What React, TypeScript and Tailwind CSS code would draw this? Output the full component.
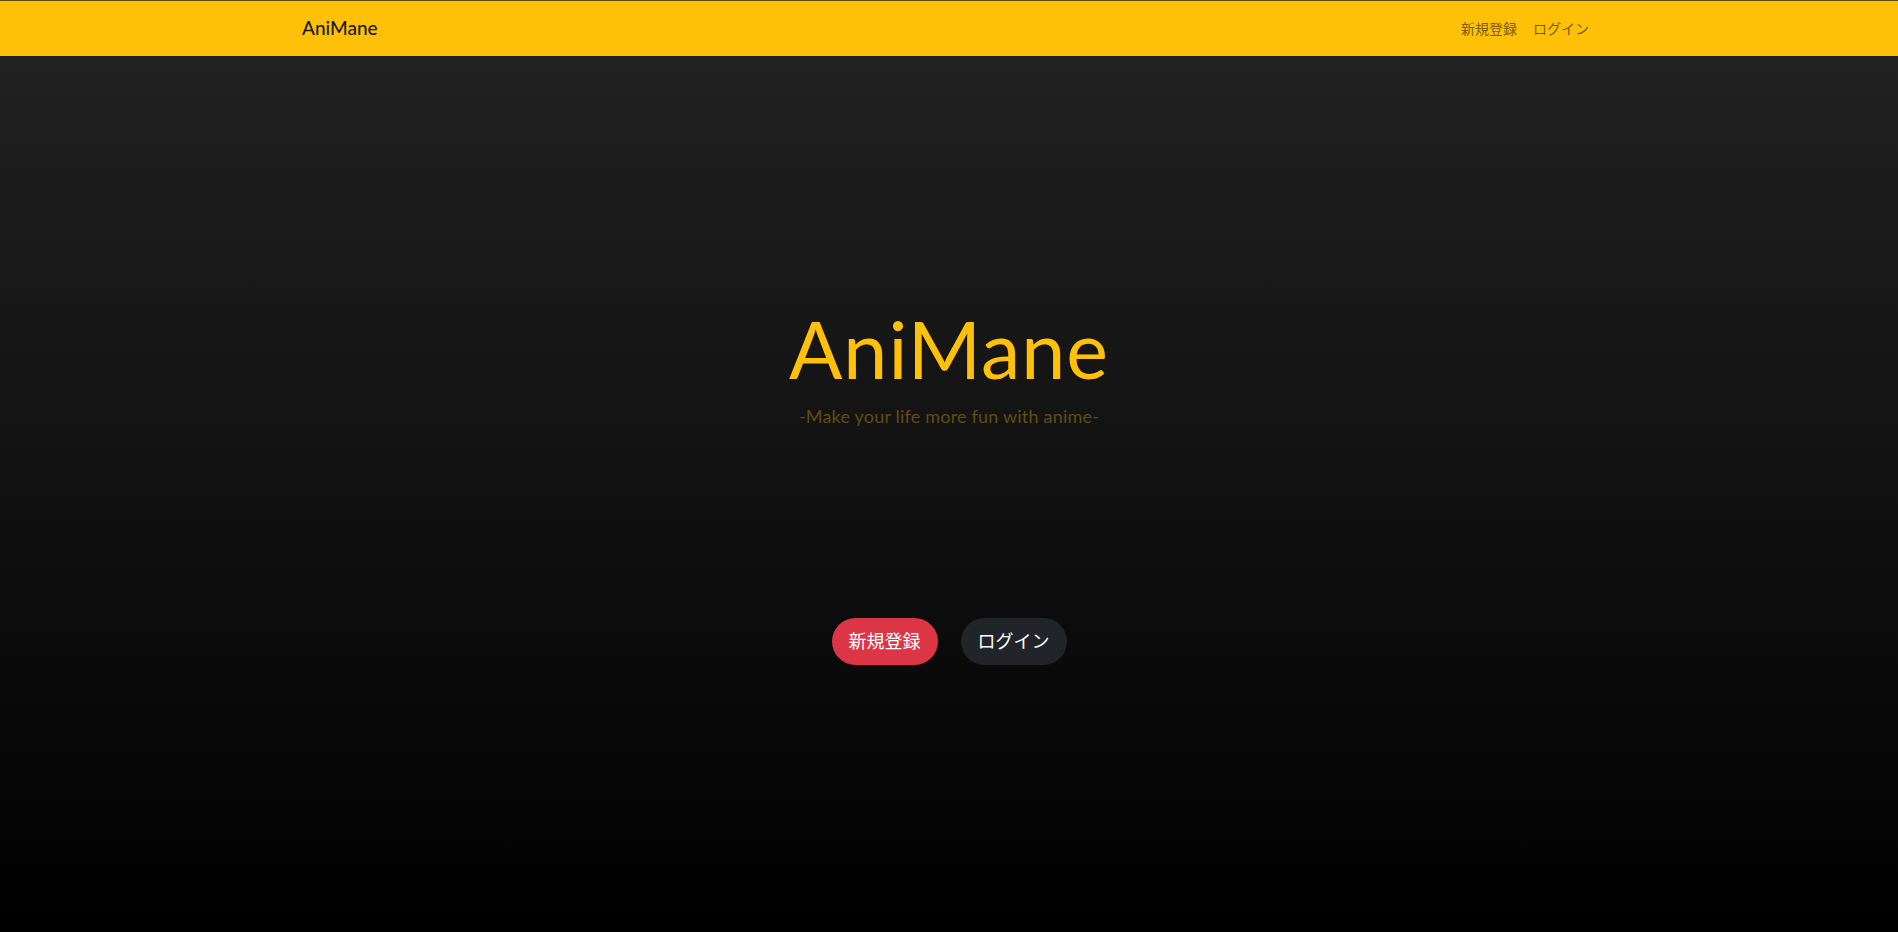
const HeroButton = ({label, color}: {label: string; color: string}) => {
  return (
    <a href="#" className={`${color} text-white text-[18px] leading-[27px] px-[17px] py-[10px] rounded-full`}>
      {label}
    </a>
  );
};

const App = () => {
  return (
    <div className="min-h-[932px] flex flex-col font-['Lato','Noto_Sans_CJK_JP',sans-serif] bg-[linear-gradient(to_bottom,#232323,#000000)]">
      <header className="bg-[#ffc107] h-[56px] border-t border-[#5e4b08]">
        <div className="w-[1296px] mx-auto h-full flex items-center justify-between">
          <a href="#" className="text-[19px] text-[#1a1a1a] font-medium pl-[1px]">AniMane</a>
          <nav className="flex items-center text-[14px] text-[#7a5d05]">
            <a href="#" className="px-2">新規登録</a>
            <a href="#" className="px-2">ログイン</a>
          </nav>
        </div>
      </header>
      <main className="flex-1 flex flex-col items-center pt-[245px]">
        <h1 className="text-[79px] leading-[96px] font-normal text-[#ffc107] tracking-[1px]">AniMane</h1>
        <p className="text-[18px] mt-[6px] text-[#5f4d15] tracking-[0.2px]">-Make your life more fun with anime-</p>
        <div className="flex gap-[23px] mt-[188px]">
          <HeroButton label="新規登録" color="bg-[#dc3545]" />
          <HeroButton label="ログイン" color="bg-[#212529]" />
        </div>
      </main>
    </div>
  );
};

export default App;
